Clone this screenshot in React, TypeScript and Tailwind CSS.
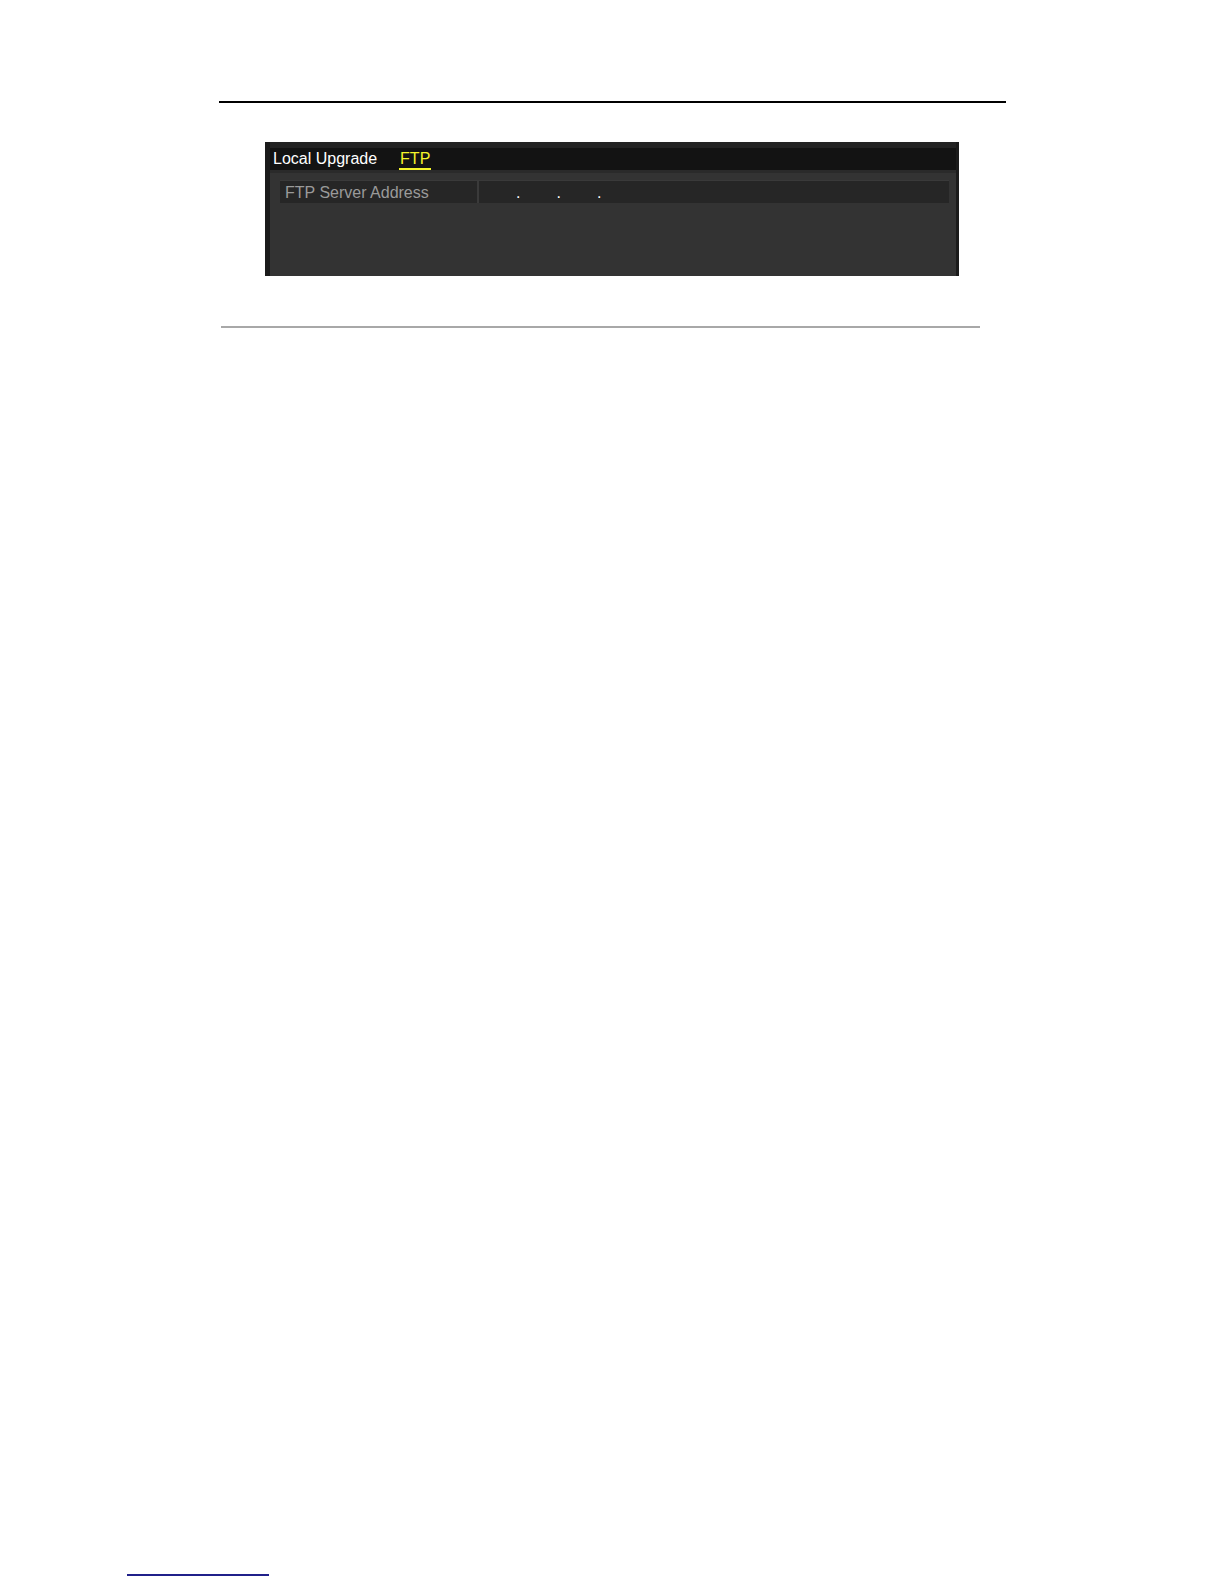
export default function App() {
  return (
    <div className="min-h-[1584px] bg-white pt-[101px] font-['Liberation_Sans',Arial,sans-serif]">
      <div className="ml-[219px] h-[2px] w-[787px] bg-black" />

      {/* upgrade dialog screenshot */}
      <div className="ml-[265px] mt-[39px] flex h-[134px] w-[694px] flex-col bg-[#1b1b1b] pl-[5px] pr-[3px]">
        <div className="h-[6px] bg-[#232323]" />
        <div className="flex h-[22px] items-center bg-[#131313] pl-[3px] text-[16px] leading-[22px]">
          <span className="text-white">Local Upgrade</span>
          <span className="ml-[22px] border-b-2 border-[#f5f52a] px-[1px] leading-[19px] text-[#f5f52a]">FTP</span>
        </div>
        <div className="flex-1 border-t-[3px] border-[#2a2a2a] bg-[#333333] pl-[10px] pr-[7px] pt-[7px]">
          <div className="flex h-[23px] border-t border-[#3a3a3a] bg-[#262626] text-[16px] leading-[23px]">
            <div className="w-[197px] pl-[5px] text-[#9a9a9a]">FTP Server Address</div>
            <div className="w-[2px] bg-[#3a3a3a]" />
            <div className="flex flex-1 pl-[37px] text-white">
              <span className="w-[40.5px]">.</span>
              <span className="w-[40.5px]">.</span>
              <span className="w-[40.5px]">.</span>
            </div>
          </div>
        </div>
      </div>

      <div className="ml-[221px] mt-[50px] h-[2px] w-[759px] bg-[#a8a8a8]" />

      <div className="ml-[127px] mt-[1246px] h-[2px] w-[142px] bg-[#20208a]" />
    </div>
  );
}
